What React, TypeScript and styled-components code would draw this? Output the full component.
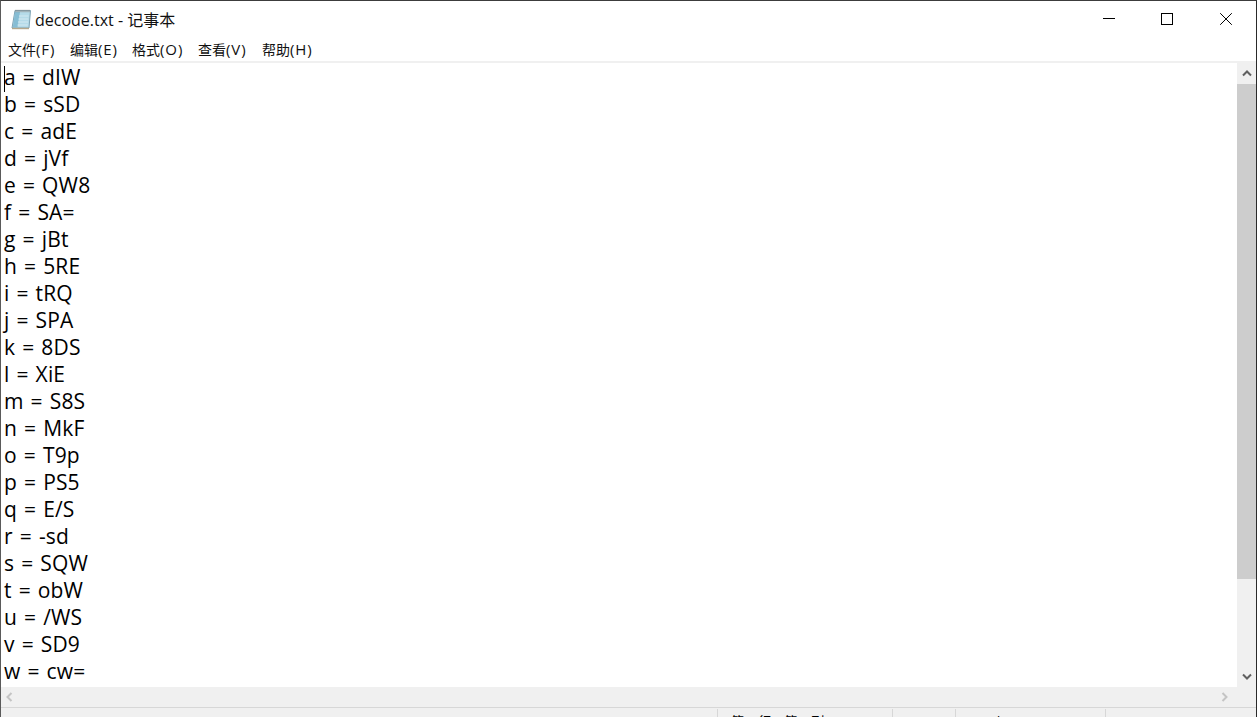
import React from "react";
import styled, { createGlobalStyle } from "styled-components";

const Global = createGlobalStyle`
  html, body { margin: 0; padding: 0; height: 100%; overflow: hidden; background: #fff; }
  #root { height: 100%; }
`;
const Win = styled.div`
  box-sizing: border-box; width: 1257px; height: 717px; display: flex; flex-direction: column;
  border-top: 1px solid #3c3c3c; border-left: 1px solid #5a5a5a; border-right: 1px solid #2a2a2a;
  font-family: "Open Sans", "Noto Sans CJK SC", sans-serif; color: #000; overflow: hidden; background: #fff;
`;
const TitleBar = styled.div`
  box-sizing: border-box; height: 37px; padding-bottom: 1px; flex: none; display: flex; align-items: center; justify-content: space-between;
`;
const TitleLeft = styled.div`
  display: flex; align-items: center; gap: 4px; padding-left: 10px; font-size: 16px; color: #111;
`;
const Controls = styled.div`display: flex; margin-right: 0.5px;`;
const Ctl = styled.div`
  width: 59px; height: 36px; display: flex; align-items: center; justify-content: center;
`;
const MenuBar = styled.div`
  box-sizing: border-box; height: 23px; padding: 0 0 2px 7px; flex: none; display: flex; align-items: center; font-size: 14px; color: #111;
`;
const MenuItem = styled.span<{ $w: number }>`
  width: ${(p) => p.$w}px; flex: none; white-space: nowrap;
`;
const MenuKey = styled.span`
  font-size: 15px; letter-spacing: 0.9px;
`;
const Divider = styled.div`height: 2px; flex: none; background: #f0f0f0;`;
const Middle = styled.div`flex: 1; display: flex; min-height: 0;`;
const Editor = styled.div`
  flex: 1; position: relative; padding: 1px 0 0 3px; font-size: 21px; line-height: 27px; overflow: hidden;
  white-space: pre; color: #000; word-spacing: 1.4px; letter-spacing: 0.15px;
`;
const Caret = styled.div`
  position: absolute; left: 3px; top: 3px; width: 1px; height: 26px; background: #000;
`;
const VBar = styled.div`
  width: 19px; flex: none; background: #f0f0f0; display: flex; flex-direction: column; align-items: center;
`;
const Arrow = styled.div`height: 21px; flex: none; width: 100%; display: flex; align-items: center; justify-content: center;`;
const Thumb = styled.div`width: 100%; height: 495px; flex: none; background: #cdcdcd;`;
const VTrack = styled.div`flex: 1;`;
const HBar = styled.div`
  height: 20px; flex: none; background: #f0f0f0; display: flex; align-items: center; justify-content: space-between;
  padding: 0 28px 0 5px;
`;
const Status = styled.div`
  height: 9px; flex: none; background: #f0f0f0; border-top: 1px solid #d7d7d7; display: flex; overflow: hidden;
  font-size: 13px; line-height: 18px; color: #000;
`;
const Grow = styled.div`flex: 1;`;
const Cell = styled.div<{ $w: number }>`
  width: ${(p) => p.$w}px; flex: none; box-sizing: border-box; border-left: 1px solid #d7d7d7; padding: 3px 0 0 13px; white-space: nowrap;
  margin-top: 1px;
`;

const lines = ["a = dIW","b = sSD","c = adE","d = jVf","e = QW8","f = SA=","g = jBt","h = 5RE","i = tRQ","j = SPA","k = 8DS","l = XiE","m = S8S","n = MkF","o = T9p","p = PS5","q = E/S","r = -sd","s = SQW","t = obW","u = /WS","v = SD9","w = cw="];

const menus: [string, string, number][] = [
  ["文件", "(F)", 62],
  ["编辑", "(E)", 62],
  ["格式", "(O)", 66],
  ["查看", "(V)", 64],
  ["帮助", "(H)", 64],
];

const NotepadIcon = () => (
  <svg width="20" height="21" viewBox="0 0 20 21">
    <path d="M4 1.5 L19.5 1.5 L18 19 L1 19 Z" fill="#b5dbe9" stroke="#7ea3b4" strokeWidth="1" />
    <path d="M4 3 L9 3 L6.5 18.5 L1.8 18.5 Z" fill="#86bdd4" />
    <path d="M1 19.5 L18 19.5" stroke="#b6a88c" strokeWidth="1.4" />
    <path d="M4.5 2 L19 2" stroke="#8c8c8c" strokeWidth="2.6" strokeDasharray="1 1" />
    <path d="M8 7H17.6M7.5 10H17.3M7 13H17M6.6 16H16.8" stroke="#d3e9f1" strokeWidth="1" />
  </svg>
);

export default function App() {
  return (
    <>
      <Global />
      <Win>
        <TitleBar>
          <TitleLeft><NotepadIcon /><span>decode.txt - 记事本</span></TitleLeft>
          <Controls>
            <Ctl>
              <svg width="16" height="12" viewBox="0 0 16 12"><path d="M3 5.5H15" stroke="#000" /></svg>
            </Ctl>
            <Ctl>
              <svg width="12" height="12" viewBox="0 0 12 12"><rect x="0.5" y="0.5" width="11" height="11" fill="none" stroke="#000" /></svg>
            </Ctl>
            <Ctl>
              <svg width="12" height="12" viewBox="0 0 12 12"><path d="M0.2 0.2L11.8 11.8M11.8 0.2L0.2 11.8" stroke="#000" /></svg>
            </Ctl>
          </Controls>
        </TitleBar>
        <MenuBar>
          {menus.map(([zh, key, w]) => (
            <MenuItem key={key} $w={w}>{zh}<MenuKey>{key}</MenuKey></MenuItem>
          ))}
        </MenuBar>
        <Divider />
        <Middle>
          <Editor>
            <Caret />
            {lines.join("\n")}
          </Editor>
          <VBar>
            <Arrow><svg width="10" height="7" viewBox="0 0 10 7"><path d="M1 5.5L5 1.5L9 5.5" fill="none" stroke="#606060" strokeWidth="2" /></svg></Arrow>
            <Thumb />
            <VTrack />
            <Arrow><svg width="10" height="7" viewBox="0 0 10 7"><path d="M1 1.5L5 5.5L9 1.5" fill="none" stroke="#606060" strokeWidth="2" /></svg></Arrow>
          </VBar>
        </Middle>
        <HBar>
          <svg width="7" height="10" viewBox="0 0 7 10"><path d="M5.5 1L1.5 5L5.5 9" fill="none" stroke="#c4c4c4" strokeWidth="2" /></svg>
          <svg width="7" height="10" viewBox="0 0 7 10"><path d="M1.5 1L5.5 5L1.5 9" fill="none" stroke="#c4c4c4" strokeWidth="2" /></svg>
        </HBar>
        <Status>
          <Grow />
          <Cell $w={175}>第 1 行，第 1 列</Cell>
          <Cell $w={63}>100%</Cell>
          <Cell $w={150}>Windows (CRLF)</Cell>
          <Cell $w={151}>UTF-8</Cell>
        </Status>
      </Win>
    </>
  );
}
